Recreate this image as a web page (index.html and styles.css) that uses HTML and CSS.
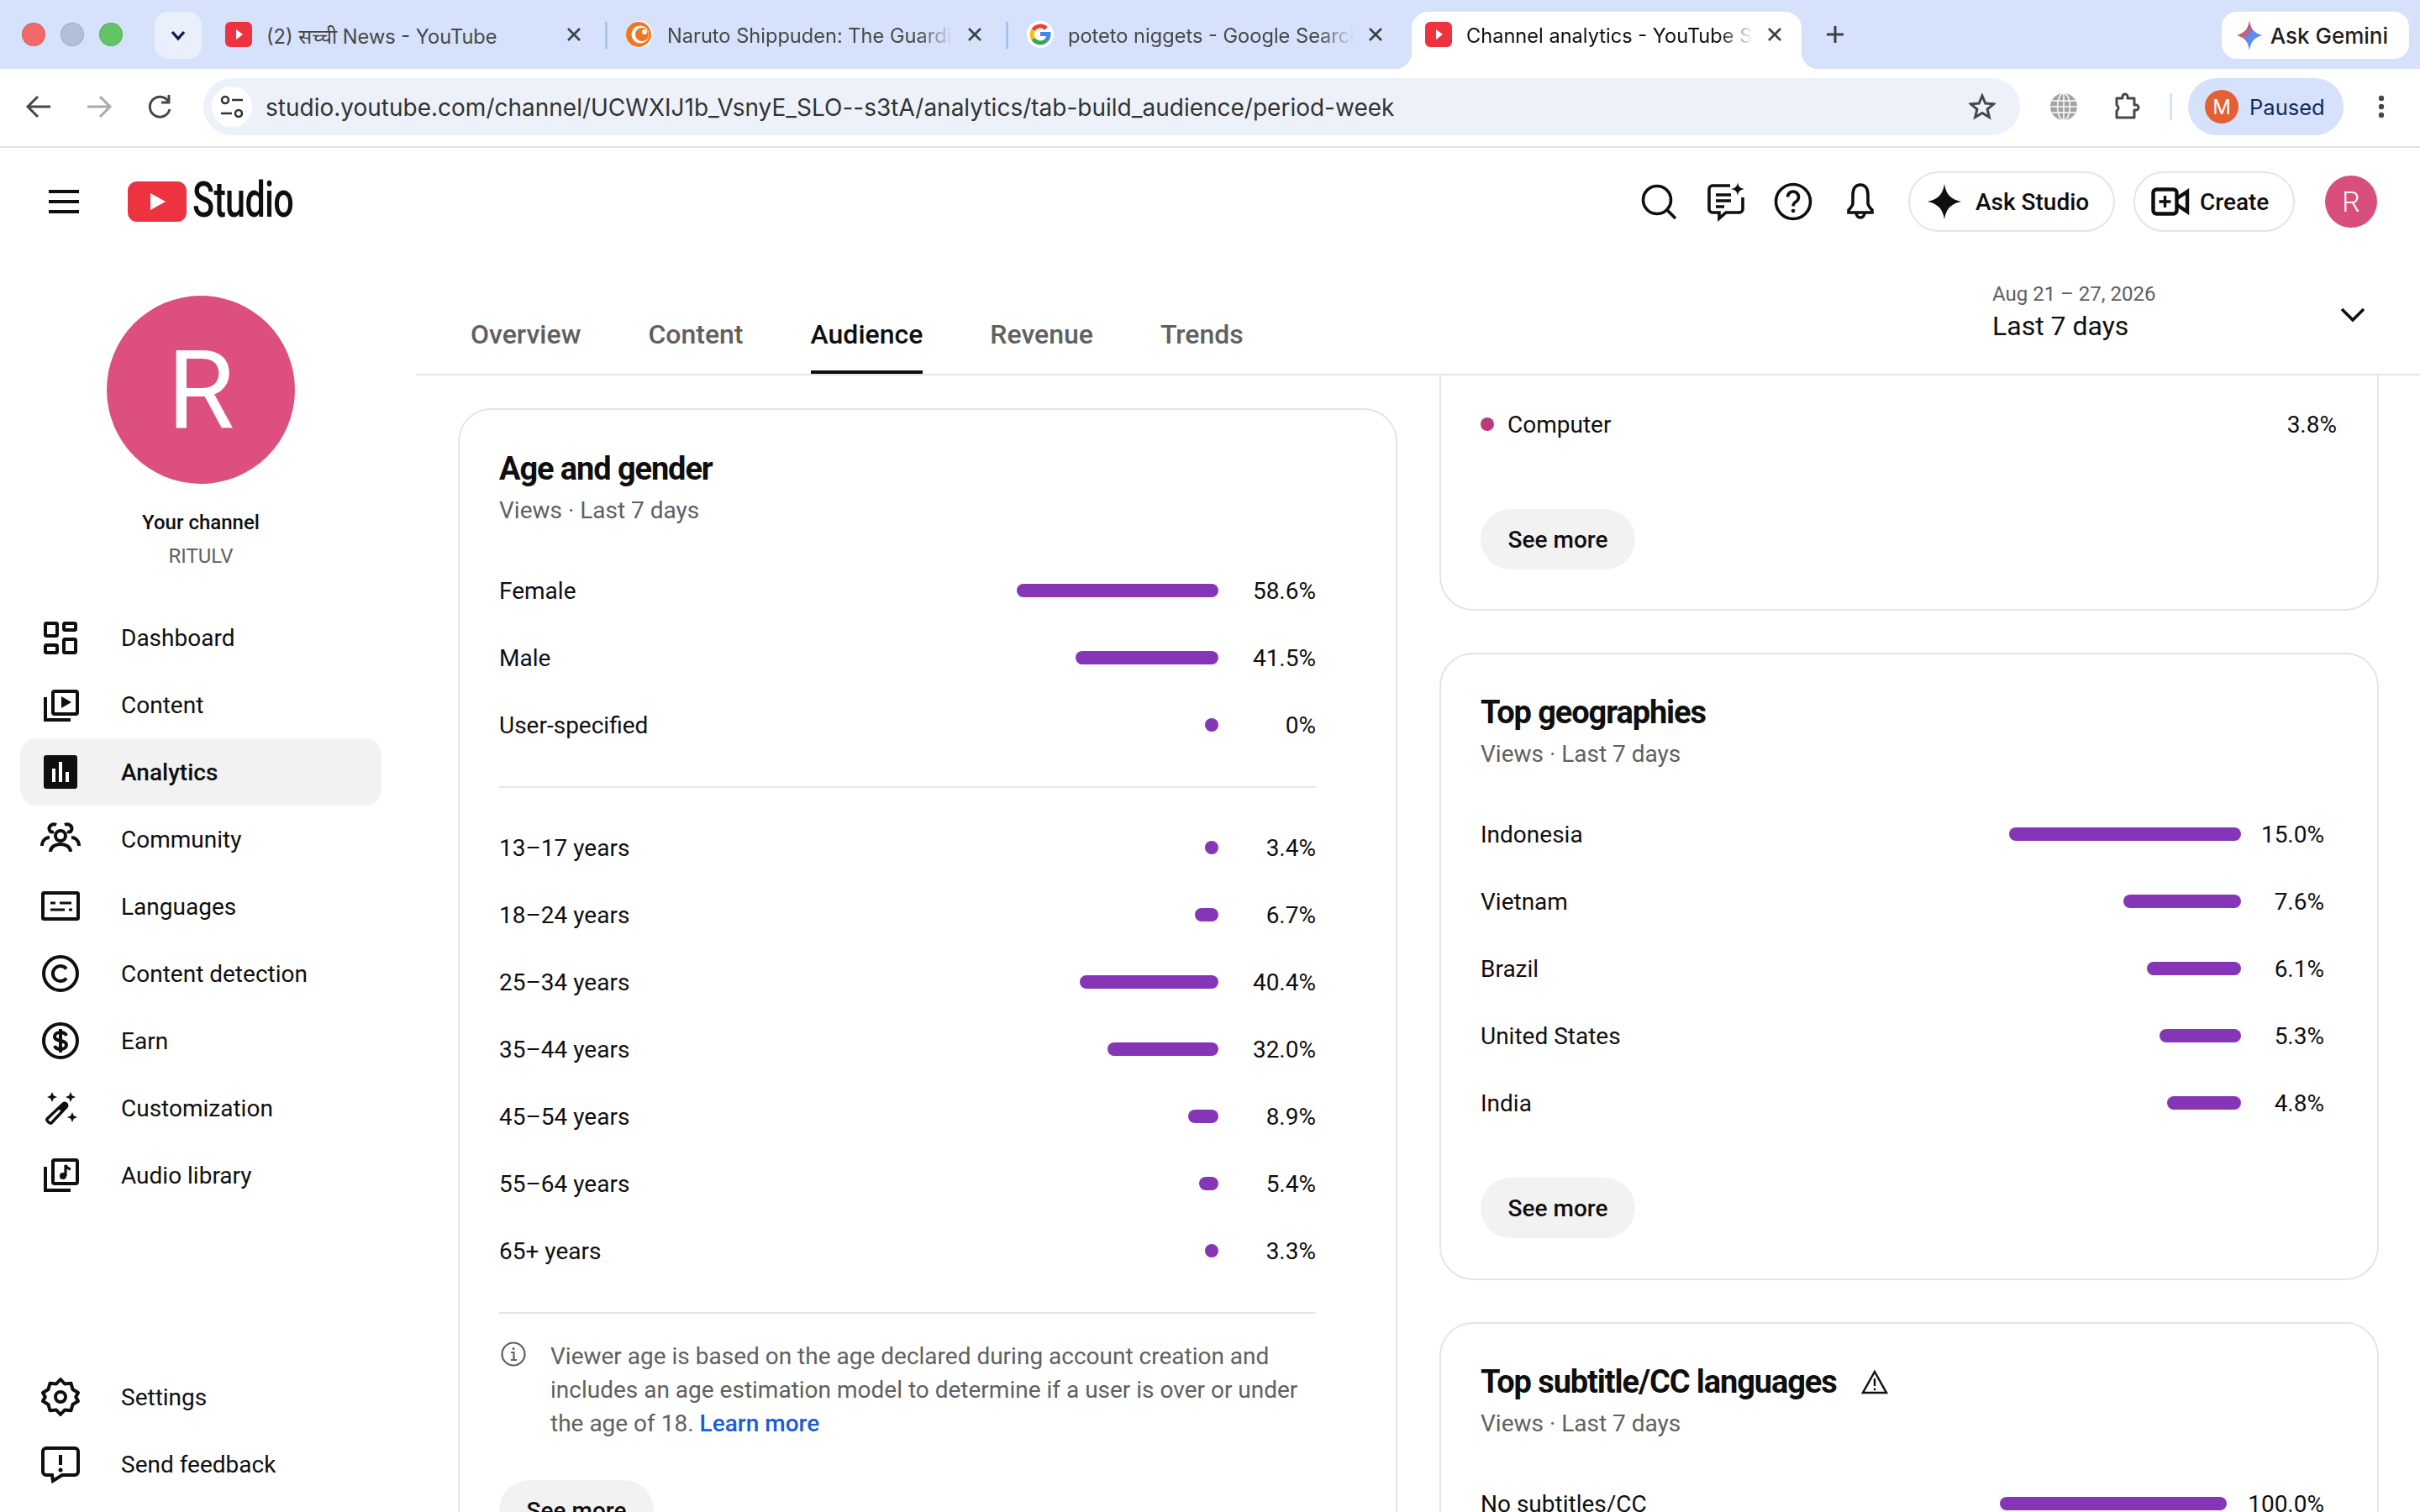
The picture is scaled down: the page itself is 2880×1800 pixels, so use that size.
FILE: index.html
```html
<!DOCTYPE html>
<html lang="en">
<head>
    <meta charset="UTF-8">
    <title>Channel analytics - YouTube Studio</title>
    <link rel="stylesheet" href="styles.css">
</head>
<body>

<svg class="defs" width="0" height="0">
    <defs>
        <linearGradient id="geminiFill" x1="0" y1="0" x2="1" y2="1">
            <stop offset="0" stop-color="#f4b400"/>
            <stop offset="0.3" stop-color="#ea4b5c"/>
            <stop offset="0.55" stop-color="#5b8df5"/>
            <stop offset="1" stop-color="#4a8ff0"/>
        </linearGradient>
        <symbol id="ytFavicon" viewBox="0 0 32 32">
            <rect y="1" width="32" height="30" rx="6" fill="#ee3340"/>
            <path d="M13 10l8 6-8 6z" fill="#fff"/>
        </symbol>
        <symbol id="closeX" viewBox="0 0 24 24">
            <path d="M5 5l14 14M19 5L5 19" fill="none" stroke="#3c4043" stroke-width="2.6"/>
        </symbol>
    </defs>
</svg>

<!-- Browser chrome -->
<div class="tab-strip">
    <div class="lights">
        <span class="light light-red"></span>
        <span class="light light-gray"></span>
        <span class="light light-green"></span>
    </div>
    <div class="tab-search">
        <svg width="22" height="22" viewBox="0 0 22 22"><path d="M4 7l7 8 7-8" fill="none" stroke="#0b1f4b" stroke-width="3.4"/></svg>
    </div>

    <div class="tab">
        <svg class="favicon"><use href="#ytFavicon"/></svg>
        <span class="tab-title">(2) सच्ची News - YouTube</span>
        <svg class="tab-close"><use href="#closeX"/></svg>
    </div>
    <span class="tab-sep"></span>
    <div class="tab">
        <svg class="favicon" viewBox="0 0 32 32">
            <circle cx="16" cy="16" r="16" fill="#fff"/>
            <circle cx="15" cy="16" r="15" fill="#f47521"/>
            <circle cx="17" cy="16" r="10.5" fill="#fff"/>
            <circle cx="19" cy="16" r="8" fill="#f47521"/>
            <circle cx="22" cy="13" r="3" fill="#fff"/>
        </svg>
        <span class="tab-title fade">Naruto Shippuden: The Guardians</span>
        <svg class="tab-close"><use href="#closeX"/></svg>
    </div>
    <span class="tab-sep"></span>
    <div class="tab tab-third">
        <svg class="favicon" viewBox="0 0 32 32">
            <circle cx="16" cy="16" r="16" fill="#fff"/>
            <path d="M7.600 10.800a10 10 0 0 1 15.500-1.900" fill="none" stroke="#ea4335" stroke-width="5"/>
            <path d="M7.600 21.200a10 10 0 0 1 0-10.400" fill="none" stroke="#fbbc05" stroke-width="5"/>
            <path d="M23 23.200a10 10 0 0 1-15.400-2" fill="none" stroke="#34a853" stroke-width="5"/>
            <path d="M16 15.500h10a10 10 0 0 1-3 7.700" fill="none" stroke="#4285f4" stroke-width="5"/>
        </svg>
        <span class="tab-title fade">poteto niggets - Google Search</span>
        <svg class="tab-close"><use href="#closeX"/></svg>
    </div>
    <div class="tab tab-active">
        <svg class="favicon"><use href="#ytFavicon"/></svg>
        <span class="tab-title fade">Channel analytics - YouTube Studio</span>
        <svg class="tab-close"><use href="#closeX"/></svg>
    </div>
    <svg class="new-tab" width="24" height="24" viewBox="0 0 24 24"><path d="M12 2v20M2 12h20" stroke="#3c4043" stroke-width="3"/></svg>

    <div class="gemini">
        <svg width="30" height="36" viewBox="0 0 30 36"><path d="M15 0c1.500 10 5 15 15 18-10 3-13.500 8-15 18-1.500-10-5-15-15-18 10-3 13.500-8 15-18z" fill="url(#geminiFill)"/></svg>
        <span>Ask Gemini</span>
    </div>
</div>

<div class="toolbar">
    <div class="nav-arrows">
        <svg width="48" height="48" viewBox="0 0 48 48"><path d="M38 24H12M23 12L11 24l12 12" fill="none" stroke="#474747" stroke-width="3"/></svg>
        <svg width="48" height="48" viewBox="0 0 48 48"><path d="M10 24h26M25 12l12 12-12 12" fill="none" stroke="#aaa" stroke-width="3"/></svg>
        <svg width="48" height="48" viewBox="0 0 48 48"><path d="M34 17a12 12 0 1 0 2 10M35 10v9h-9" fill="none" stroke="#474747" stroke-width="3"/></svg>
    </div>
    <div class="omnibox">
        <div class="site-chip">
            <svg width="28" height="30" viewBox="0 0 28 30">
                <circle cx="6" cy="7" r="4" fill="none" stroke="#333" stroke-width="2.6"/>
                <path d="M14 7h13M1 23h13" stroke="#333" stroke-width="2.6"/>
                <circle cx="22" cy="23" r="4" fill="none" stroke="#333" stroke-width="2.6"/>
            </svg>
        </div>
        <span class="url">studio.youtube.com/channel/UCWXIJ1b_VsnyE_SLO--s3tA/analytics/tab-build_audience/period-week</span>
        <svg class="star" width="32" height="32" viewBox="0 0 32 32"><path d="M16 3l3.800 9 9.700.8-7.400 6.300 2.300 9.500-8.400-5.100-8.400 5.100 2.300-9.500-7.400-6.300 9.700-.8z" fill="none" stroke="#474747" stroke-width="3"/></svg>
    </div>
    <svg class="globe" width="32" height="32" viewBox="0 0 32 32" fill="none" stroke="#fff" stroke-width="1.500">
        <circle cx="16" cy="16" r="16" fill="#a3a3a3" stroke="none"/>
        <ellipse cx="16" cy="16" rx="7.500" ry="16"/>
        <path d="M16 0v32M2 9h28M0 16h32M2 23h28"/>
    </svg>
    <svg class="puzzle" width="34" height="34" viewBox="0 0 34 34"><path d="M6 7h7V5a3 3 0 0 1 6 0v2h8v8h2a3 3 0 0 1 0 6h-2v9H6v-8a4 4 0 0 0 0-7z" fill="none" stroke="#474747" stroke-width="3" stroke-linejoin="round"/></svg>
    <span class="toolbar-sep"></span>
    <div class="profile-pill">
        <span class="profile-initial">M</span>
        <span>Paused</span>
    </div>
    <svg class="kebab" width="8" height="28" viewBox="0 0 8 28"><circle cx="4" cy="4" r="3.200" fill="#474747"/><circle cx="4" cy="14" r="3.200" fill="#474747"/><circle cx="4" cy="24" r="3.200" fill="#474747"/></svg>
</div>

<!-- Studio header -->
<header class="topbar">
    <svg class="hamburger" width="36" height="28" viewBox="0 0 36 28"><path d="M0 2h36M0 14h36M0 26h36" stroke="#0f0f0f" stroke-width="4"/></svg>
    <div class="logo">
        <svg width="70" height="48" viewBox="0 0 70 48"><rect width="70" height="48" rx="11" fill="#ee3340"/><path d="M27 14l18 10-18 10z" fill="#fff"/></svg>
        <span class="logo-text">Studio</span>
    </div>
    <div class="top-actions">
        <svg class="top-icon" width="48" height="48" viewBox="0 0 48 48" fill="none" stroke="#0f0f0f" stroke-width="3.600"><circle cx="22" cy="22" r="16.500"/><path d="M34 34l10 10"/></svg>
        <svg class="top-icon" width="48" height="48" viewBox="0 0 48 48" fill="none" stroke="#0f0f0f" stroke-width="3.600"><path d="M29 5H8a4 4 0 0 0-4 4v24a4 4 0 0 0 4 4h8v7l8-7h16a4 4 0 0 0 4-4V19"/><path d="M12 16h18M12 23h18M12 30h10"/><path d="M38 1c.800 5 2.500 7 8 8-5.500 1-7.200 3-8 8-.800-5-2.500-7-8-8 5.500-1 7.200-3 8-8z" fill="#0f0f0f" stroke="none"/></svg>
        <svg class="top-icon" width="48" height="48" viewBox="0 0 48 48" fill="none" stroke="#0f0f0f" stroke-width="3.600"><circle cx="24" cy="24" r="20.500"/><path d="M17.500 18.500a6.500 6.500 0 1 1 10 5.500c-2.300 1.500-3.500 2.800-3.500 5.500"/><circle cx="24" cy="35" r="2.300" fill="#0f0f0f" stroke="none"/></svg>
        <svg class="top-icon" width="48" height="48" viewBox="0 0 48 48" fill="none" stroke="#0f0f0f" stroke-width="3.600"><path d="M24 4c-6 0-9 5-9 12v10c0 3-2 5-5 8v3h28v-3c-3-3-5-5-5-8V16c0-7-3-12-9-12z"/><path d="M19 37a5 6 0 0 0 10 0"/></svg>
        <div class="top-button top-ask">
            <svg width="40" height="42" viewBox="0 0 40 42"><path d="M20 0c2 12 7 18 20 21-13 3-18 9-20 21-2-12-7-18-20-21 13-3 18-9 20-21z" fill="#0f0f0f"/></svg>
            <span>Ask Studio</span>
        </div>
        <div class="top-button top-create">
            <svg width="46" height="34" viewBox="0 0 46 34" fill="none" stroke="#0f0f0f" stroke-width="4.400"><rect x="2.500" y="2.500" width="28" height="29" rx="4"/><path d="M16.500 10v14M9.500 17h14" stroke-width="3.400"/><path d="M31 13l12-8v24l-12-8"/></svg>
            <span>Create</span>
        </div>
        <div class="top-avatar">R</div>
    </div>
</header>

<div class="page">
    <aside class="sidebar">
        <div class="channel">
            <div class="channel-avatar">R</div>
            <div class="channel-label">Your channel</div>
            <div class="channel-name">RITULV</div>
        </div>

        <nav class="nav-main">
            <a class="nav-item">
                <svg class="nav-icon" viewBox="0 0 48 48"><rect x="6" y="7" width="14" height="15" rx="1.500"/><rect x="6" y="33" width="14" height="9" rx="1.500"/><rect x="28" y="7" width="14" height="8" rx="1.500"/><rect x="28" y="26" width="14" height="16" rx="1.500"/></svg>
                Dashboard
            </a>
            <a class="nav-item">
                <svg class="nav-icon" viewBox="0 0 48 48"><rect x="15" y="8" width="29" height="27" rx="2"/><path d="M6 15v27h30"/><path d="M25 14l12 7-12 7z" class="solid"/></svg>
                Content
            </a>
            <a class="nav-item nav-active">
                <svg class="nav-icon" viewBox="0 0 48 48"><rect x="4" y="4" width="40" height="40" rx="3" class="solid"/><path d="M14 20h4v16h-4zM22 12h4v24h-4zM30 24h4v12h-4z" fill="#fff" stroke="none"/></svg>
                Analytics
            </a>
            <a class="nav-item">
                <svg class="nav-icon" viewBox="0 0 48 48" stroke-width="3.400"><circle cx="24" cy="20" r="6"/><path d="M12 39c0-12 24-12 24 0"/><path d="M16 15c-5 2-7-4-4-7 2-2 5-2 7-1M32 15c5 2 7-4 4-7-2-2-5-2-7-1"/><path d="M2 32c0-6 4-10 9-10M46 32c0-6-4-10-9-10"/></svg>
                Community
            </a>
            <a class="nav-item">
                <svg class="nav-icon" viewBox="0 0 48 48"><rect x="3" y="8" width="42" height="31" rx="1.500"/><path d="M12 20h6M23 20h14M12 28h17M34 28h4" stroke-width="3"/></svg>
                Languages
            </a>
            <a class="nav-item">
                <svg class="nav-icon" viewBox="0 0 48 48"><circle cx="24" cy="24" r="20"/><path d="M31 18.500a9 9 0 1 0 0 11"/></svg>
                Content detection
            </a>
            <a class="nav-item">
                <svg class="nav-icon" viewBox="0 0 48 48"><circle cx="24" cy="24" r="20"/><path d="M31 18c-1-3-4-4-7-4-4 0-7 2-7 5 0 7 14 3 14 10 0 3-3 5-7 5-3 0-6-1-7-4M24 10v28"/></svg>
                Earn
            </a>
            <a class="nav-item">
                <svg class="nav-icon" viewBox="0 0 48 48"><path d="M8 37l19-18c3-2 6 1 4 4L13 42c-2 1-6-3-5-5z" stroke-width="3.400"/><path d="M21 25l5-6c3-2 6 1 4 4l-5 5z" class="solid"/><path class="spark" d="M14 5l1.800 4.200L20 11l-4.200 1.800L14 17l-1.800-4.200L8 11l4.200-1.800zM36 5l1.800 4.200L42 11l-4.200 1.800L36 17l-1.800-4.200L30 11l4.200-1.800zM38 29l1.800 4.200L44 35l-4.200 1.800L38 41l-1.800-4.200L32 35l4.200-1.800z"/></svg>
                Customization
            </a>
            <a class="nav-item">
                <svg class="nav-icon" viewBox="0 0 48 48"><rect x="15" y="6" width="29" height="28" rx="2"/><path d="M6 14v28h30"/><circle cx="27" cy="25" r="4" class="solid"/><path d="M30 25V12c1 3 3 4 6 5" stroke-width="3.200"/></svg>
                Audio library
            </a>
        </nav>

        <nav class="nav-bottom">
            <a class="nav-item">
                <svg class="nav-icon" viewBox="0 0 48 48"><path d="M24 3l5 5.500 7.500-.8 2 7.300 6.500 4-2.800 5 2.800 5-6.500 4-2 7.300-7.500-.8-5 5.500-5-5.500-7.500.8-2-7.300-6.500-4 2.800-5-2.800-5 6.500-4 2-7.300 7.500.8z" stroke-linejoin="round"/><circle cx="24" cy="24" r="6"/></svg>
                Settings
            </a>
            <a class="nav-item">
                <svg class="nav-icon" viewBox="0 0 48 48"><path d="M7 5h34a4 4 0 0 1 4 4v24a4 4 0 0 1-4 4H26l-11 7-1-7H7a4 4 0 0 1-4-4V9a4 4 0 0 1 4-4z"/><path d="M24 13v12"/><circle cx="24" cy="31" r="2.500" class="solid"/></svg>
                Send feedback
            </a>
        </nav>
    </aside>

    <main class="content">
        <div class="section-bar">
            <div class="section-tabs">
                <a class="section-tab">Overview</a>
                <a class="section-tab">Content</a>
                <a class="section-tab section-tab-active">Audience</a>
                <a class="section-tab">Revenue</a>
                <a class="section-tab">Trends</a>
            </div>
            <div class="period">
                <div>
                    <div class="period-dates">Aug 21 – 27, 2026</div>
                    <div class="period-name">Last 7 days</div>
                </div>
                <svg class="period-arrow" width="30" height="18" viewBox="0 0 30 18"><path d="M2 2l13 13L28 2" fill="none" stroke="#0f0f0f" stroke-width="3.600"/></svg>
            </div>
        </div>

        <div class="panels">
            <div class="column">
                <section class="card card-left">
                    <h2 class="card-title">Age and gender</h2>
                    <div class="card-sub">Views · Last 7 days</div>

                    <div class="rows">
                        <div class="row"><span>Female</span><span class="bar-cell"><span class="bar" style="width:240px"></span></span><span class="pct">58.6%</span></div>
                        <div class="row"><span>Male</span><span class="bar-cell"><span class="bar" style="width:170px"></span></span><span class="pct">41.5%</span></div>
                        <div class="row"><span>User-specified</span><span class="bar-cell"><span class="bar" style="width:16px"></span></span><span class="pct">0%</span></div>
                    </div>
                    <hr class="rule">
                    <div class="rows">
                        <div class="row"><span>13–17 years</span><span class="bar-cell"><span class="bar" style="width:16px"></span></span><span class="pct">3.4%</span></div>
                        <div class="row"><span>18–24 years</span><span class="bar-cell"><span class="bar" style="width:28px"></span></span><span class="pct">6.7%</span></div>
                        <div class="row"><span>25–34 years</span><span class="bar-cell"><span class="bar" style="width:165px"></span></span><span class="pct">40.4%</span></div>
                        <div class="row"><span>35–44 years</span><span class="bar-cell"><span class="bar" style="width:132px"></span></span><span class="pct">32.0%</span></div>
                        <div class="row"><span>45–54 years</span><span class="bar-cell"><span class="bar" style="width:36px"></span></span><span class="pct">8.9%</span></div>
                        <div class="row"><span>55–64 years</span><span class="bar-cell"><span class="bar" style="width:23px"></span></span><span class="pct">5.4%</span></div>
                        <div class="row"><span>65+ years</span><span class="bar-cell"><span class="bar" style="width:16px"></span></span><span class="pct">3.3%</span></div>
                    </div>
                    <hr class="rule">
                    <div class="note">
                        <svg class="note-icon" width="30" height="30" viewBox="0 0 30 30" fill="none" stroke="#606060" stroke-width="2.200"><circle cx="15" cy="15" r="13.500"/><path d="M12 13h3.500v9M12 22h7"/><circle cx="15" cy="8.500" r="1.500" fill="#606060" stroke="none"/></svg>
                        <p>Viewer age is based on the age declared during account creation and includes an age estimation model to determine if a user is over or under the age of 18. <a class="link">Learn more</a></p>
                    </div>
                    <a class="see-more">See more</a>
                </section>
            </div>

            <div class="column">
                <section class="card card-cut">
                    <div class="row row-device"><span class="device"><i class="dot"></i>Computer</span><span class="pct">3.8%</span></div>
                    <a class="see-more">See more</a>
                </section>

                <section class="card">
                    <h2 class="card-title">Top geographies</h2>
                    <div class="card-sub">Views · Last 7 days</div>
                    <div class="rows">
                        <div class="row row-wide"><span>Indonesia</span><span class="bar-cell"><span class="bar" style="width:276px"></span></span><span class="pct">15.0%</span></div>
                        <div class="row row-wide"><span>Vietnam</span><span class="bar-cell"><span class="bar" style="width:140px"></span></span><span class="pct">7.6%</span></div>
                        <div class="row row-wide"><span>Brazil</span><span class="bar-cell"><span class="bar" style="width:112px"></span></span><span class="pct">6.1%</span></div>
                        <div class="row row-wide"><span>United States</span><span class="bar-cell"><span class="bar" style="width:97px"></span></span><span class="pct">5.3%</span></div>
                        <div class="row row-wide"><span>India</span><span class="bar-cell"><span class="bar" style="width:88px"></span></span><span class="pct">4.8%</span></div>
                    </div>
                    <a class="see-more">See more</a>
                </section>

                <section class="card">
                    <h2 class="card-title">Top subtitle/CC languages
                        <svg class="warn" width="32" height="30" viewBox="0 0 32 30" fill="none" stroke="#0f0f0f" stroke-width="2.400"><path d="M16 3l14 25H2z"/><path d="M16 11v9"/><circle cx="16" cy="24" r="1.400" fill="#0f0f0f" stroke="none"/></svg>
                    </h2>
                    <div class="card-sub">Views · Last 7 days</div>
                    <div class="rows">
                        <div class="row row-wide"><span>No subtitles/CC</span><span class="bar-cell bar-cell-full"><span class="bar" style="width:270px"></span></span><span class="pct">100.0%</span></div>
                    </div>
                </section>
            </div>
        </div>
    </main>
</div>

</body>
</html>
```

FILE: styles.css
```css
* {
    box-sizing: border-box;
}

html, body {
    margin: 0;
    height: 100%;
}

body {
    display: flex;
    flex-direction: column;
    width: 2880px;
    height: 1800px;
    overflow: hidden;
    background-color: #fff;
    color: #0f0f0f;
    font-family: Roboto, "Noto Sans", sans-serif;
    font-size: 28px;
}

.defs {
    position: absolute;
}

a {
    color: inherit;
    text-decoration: none;
}

/* Barra de abas */
.tab-strip {
    display: flex;
    align-items: flex-end;
    flex: none;
    height: 82px;
    padding-left: 26px;
    background-color: #d6e2fb;
    font-family: Inter, "Noto Sans", sans-serif;
    font-size: 23.6px;
}

.lights {
    display: flex;
    gap: 18px;
    align-self: center;
    margin-right: 38px;
}

.light {
    width: 28px;
    height: 28px;
    border-radius: 50%;
    border: 1px solid rgba(0, 0, 0, 0.1);
}

.light-red { background-color: #f06a6a; }
.light-gray { background-color: #b2bfd9; }
.light-green { background-color: #62c465; }

.tab-search {
    display: flex;
    align-items: center;
    justify-content: center;
    align-self: flex-start;
    width: 56px;
    height: 56px;
    margin-top: 14px;
    margin-right: 6px;
    border-radius: 16px;
    background-color: #e9f0fc;
}

.tab {
    display: flex;
    align-items: center;
    width: 474px;
    height: 68px;
    padding: 0 25px 14px 22px;
    color: #474747;
}

.tab-third {
    margin-right: 6px;
}

.favicon {
    flex: none;
    width: 32px;
    height: 32px;
    margin-right: 17px;
}

.tab-title {
    flex: 1;
    padding-top: 3px;
    overflow: hidden;
    white-space: nowrap;
}

.fade {
    -webkit-mask-image: linear-gradient(to right, #000 88%, transparent 100%);
    mask-image: linear-gradient(to right, #000 88%, transparent 100%);
}

.tab-close {
    flex: none;
    width: 24px;
    height: 24px;
    margin-left: 14px;
}

.tab-sep {
    align-self: flex-start;
    width: 3px;
    height: 32px;
    margin-top: 26px;
    background-color: #a9c3f1;
}

.tab-active {
    position: relative;
    width: 464px;
    padding: 0 20px 14px 16px;
    border-radius: 20px 20px 0 0;
    background-color: #fff;
    color: #0f0f0f;
}

.tab-active::before,
.tab-active::after {
    content: "";
    position: absolute;
    bottom: 0;
    width: 20px;
    height: 20px;
}

.tab-active::before {
    left: -20px;
    background: radial-gradient(circle at 0 0, transparent 20px, #fff 20.5px);
}

.tab-active::after {
    right: -20px;
    background: radial-gradient(circle at 100% 0, transparent 20px, #fff 20.5px);
}

.new-tab {
    align-self: center;
    margin-left: 28px;
}

.gemini {
    display: flex;
    align-items: center;
    gap: 10px;
    align-self: flex-start;
    height: 56px;
    margin: 14px 13px 0 auto;
    padding: 0 25px 0 18px;
    border-radius: 18px;
    background-color: #fff;
    font-size: 26px;
    font-weight: 500;
    color: #1f1f1f;
}

/* Barra de endereço */
.toolbar {
    display: flex;
    align-items: center;
    flex: none;
    height: 94px;
    padding: 0 42px 2px 22px;
    border-bottom: 2px solid #e0e0e0;
    border-radius: 14px 14px 0 0;
    background-color: #fff;
}

.nav-arrows {
    display: flex;
    gap: 24px;
    margin-right: 28px;
}

.omnibox {
    display: flex;
    align-items: center;
    width: 2163px;
    height: 68px;
    padding: 0 29px 0 10px;
    border-radius: 34px;
    background-color: #edf2fa;
    font-family: Inter, "Noto Sans", sans-serif;
    font-size: 28px;
    color: #333;
}

.site-chip {
    display: flex;
    align-items: center;
    justify-content: center;
    width: 48px;
    height: 48px;
    margin-right: 16px;
    border-radius: 50%;
    background-color: #fff;
}

.url {
    flex: 1;
    padding-top: 2px;
    white-space: nowrap;
}

.globe {
    margin-left: 36px;
}

.puzzle {
    margin-left: 41px;
}

.toolbar-sep {
    width: 3px;
    height: 32px;
    margin: 0 19px 0 35px;
    background-color: #d6e2fb;
}

.profile-pill {
    display: flex;
    align-items: center;
    gap: 13px;
    width: 185px;
    height: 68px;
    padding-left: 20px;
    border-radius: 34px;
    background-color: #d6e2fb;
    font-family: Inter, "Noto Sans", sans-serif;
    font-size: 25.5px;
    color: #0f2a5c;
}

.profile-initial {
    display: flex;
    align-items: center;
    justify-content: center;
    width: 40px;
    height: 40px;
    border-radius: 50%;
    background-color: #e35f34;
    color: #fff;
    font-size: 24px;
}

.kebab {
    margin-left: 41px;
}

/* Cabeçalho do Studio */
.topbar {
    display: flex;
    align-items: center;
    flex: none;
    height: 128px;
    padding: 0 51px 0 58px;
}

.logo {
    display: flex;
    align-items: center;
    gap: 7px;
    margin-left: 58px;
}

.logo-text {
    display: inline-block;
    width: 118px;
    margin-bottom: 5px;
    font-size: 60px;
    font-weight: 500;
    line-height: 1;
    letter-spacing: -1px;
    white-space: nowrap;
    transform: scaleX(0.72);
    transform-origin: left center;
}

.top-actions {
    display: flex;
    align-items: center;
    margin-left: auto;
    gap: 32px;
}

.top-button {
    display: flex;
    align-items: center;
    height: 72px;
    border: 2px solid #e5e5e5;
    border-radius: 36px;
    font-size: 28px;
    font-weight: 500;
}

.top-ask {
    width: 246px;
    gap: 17px;
    margin-left: 1px;
    padding-left: 21px;
}

.top-create {
    width: 192px;
    gap: 12px;
    margin-left: -10px;
    padding-left: 19px;
}

.top-avatar {
    display: flex;
    align-items: center;
    justify-content: center;
    width: 62px;
    height: 62px;
    margin-left: 4px;
    border-radius: 50%;
    background-color: #d94f7c;
    color: #fff;
    font-size: 34px;
    font-weight: 300;
}

.page {
    display: flex;
    flex: 1;
    min-height: 0;
}

/* Menu lateral */
.sidebar {
    display: flex;
    flex-direction: column;
    flex: none;
    width: 495px;
    padding: 48px 41px 17px 24px;
}

.channel {
    display: flex;
    flex-direction: column;
    align-items: center;
    height: 367px;
}

.channel-avatar {
    display: flex;
    align-items: center;
    justify-content: center;
    width: 224px;
    height: 224px;
    border-radius: 50%;
    background-color: #dc4f7e;
    color: #fff;
    font-size: 130px;
}

.channel-label {
    margin-top: 30px;
    font-size: 24px;
    font-weight: 500;
    line-height: 32px;
}

.channel-name {
    margin-top: 8px;
    font-size: 24px;
    line-height: 32px;
    color: #606060;
}

.nav-bottom {
    margin-top: auto;
}

.nav-item {
    display: flex;
    align-items: center;
    gap: 48px;
    height: 80px;
    padding-left: 24px;
    border-radius: 20px;
    font-size: 28px;
}

.nav-icon {
    flex: none;
    width: 48px;
    height: 48px;
    fill: none;
    stroke: #0f0f0f;
    stroke-width: 4;
}

.nav-icon .solid,
.nav-icon .spark {
    fill: #0f0f0f;
    stroke: none;
}

.nav-active {
    background-color: #f2f2f2;
    font-weight: 500;
}

/* Abas de seção */
.content {
    display: flex;
    flex-direction: column;
    flex: 1;
    min-width: 0;
}

.section-bar {
    display: flex;
    flex: none;
    justify-content: space-between;
    height: 143px;
    padding: 0 65px;
    border-bottom: 2px solid #e5e5e5;
}

.section-tabs {
    display: flex;
    align-items: flex-end;
    gap: 80px;
}

.section-tab {
    padding-bottom: 25px;
    border-bottom: 4px solid transparent;
    font-size: 32px;
    font-weight: 500;
    line-height: 36px;
    color: #606060;
}

.section-tab-active {
    border-bottom-color: #0f0f0f;
    color: #0f0f0f;
}

.period {
    display: flex;
    justify-content: space-between;
    align-items: center;
    width: 444px;
    padding-top: 30px;
    height: 104px;
}

.period-dates {
    font-size: 24px;
    line-height: 32px;
    color: #606060;
}

.period-name {
    margin-top: 2px;
    font-size: 32px;
    line-height: 40px;
}

.period-arrow {
    margin-top: 8px;
}

/* Cartões */
.panels {
    display: flex;
    gap: 50px;
    flex: 1;
    min-height: 0;
    padding-left: 50px;
    overflow: hidden;
}

.column {
    display: flex;
    flex-direction: column;
    flex: none;
    gap: 50px;
    width: 1118px;
}

.card {
    flex: none;
    padding: 46px 63px 48px 47px;
    border: 2px solid #e5e5e5;
    border-radius: 40px;
}

.card-left {
    margin-top: 39px;
    padding-top: 47px;
    padding-right: 95px;
}

.card-cut {
    height: 280px;
    padding: 18px 48px 0 47px;
    border-top: 0;
    border-radius: 0 0 40px 40px;
}

.card-title {
    display: flex;
    align-items: center;
    gap: 29px;
    margin: 0;
    font-size: 38px;
    font-weight: 700;
    line-height: 46px;
    letter-spacing: -1.1px;
}

.card-sub {
    margin-top: 9px;
    font-size: 28px;
    line-height: 36px;
    color: #606060;
}

.rows {
    margin-top: 37px;
}

.rule + .rows {
    margin-top: 0;
}

.row {
    display: grid;
    grid-template-columns: 1fr auto 116px;
    align-items: center;
    height: 80px;
}

.row-wide {
    grid-template-columns: 1fr auto 99px;
}

.row-device {
    grid-template-columns: 1fr auto;
}

.device {
    display: flex;
    align-items: center;
    gap: 16px;
}

.dot {
    width: 16px;
    height: 16px;
    border-radius: 50%;
    background-color: #b93b7f;
}

.bar-cell {
    display: flex;
    justify-content: flex-end;
}

.bar-cell-full {
    padding-right: 17px;
}

.bar {
    display: block;
    height: 16px;
    border-radius: 8px;
    background-color: #8536b6;
}

.pct {
    text-align: right;
}

.rule {
    height: 2px;
    margin: 33px 0 31px;
    border: 0;
    background-color: #e5e5e5;
}

.note {
    display: flex;
    gap: 29px;
    margin-top: 1px;
}

.note-icon {
    flex: none;
    margin-left: 2px;
    margin-top: 2px;
}

.note p {
    margin: 0;
    font-size: 28px;
    line-height: 40px;
    color: #606060;
}

.link {
    color: #1c5bd6;
    font-weight: 500;
}

.see-more {
    display: flex;
    align-items: center;
    justify-content: center;
    width: 184px;
    height: 72px;
    margin-top: 49px;
    border-radius: 36px;
    background-color: #f2f2f2;
    font-size: 28px;
    font-weight: 500;
}

.card-left .see-more {
    margin-top: 47px;
}

.card-cut .see-more {
    margin-top: 61px;
}
```
